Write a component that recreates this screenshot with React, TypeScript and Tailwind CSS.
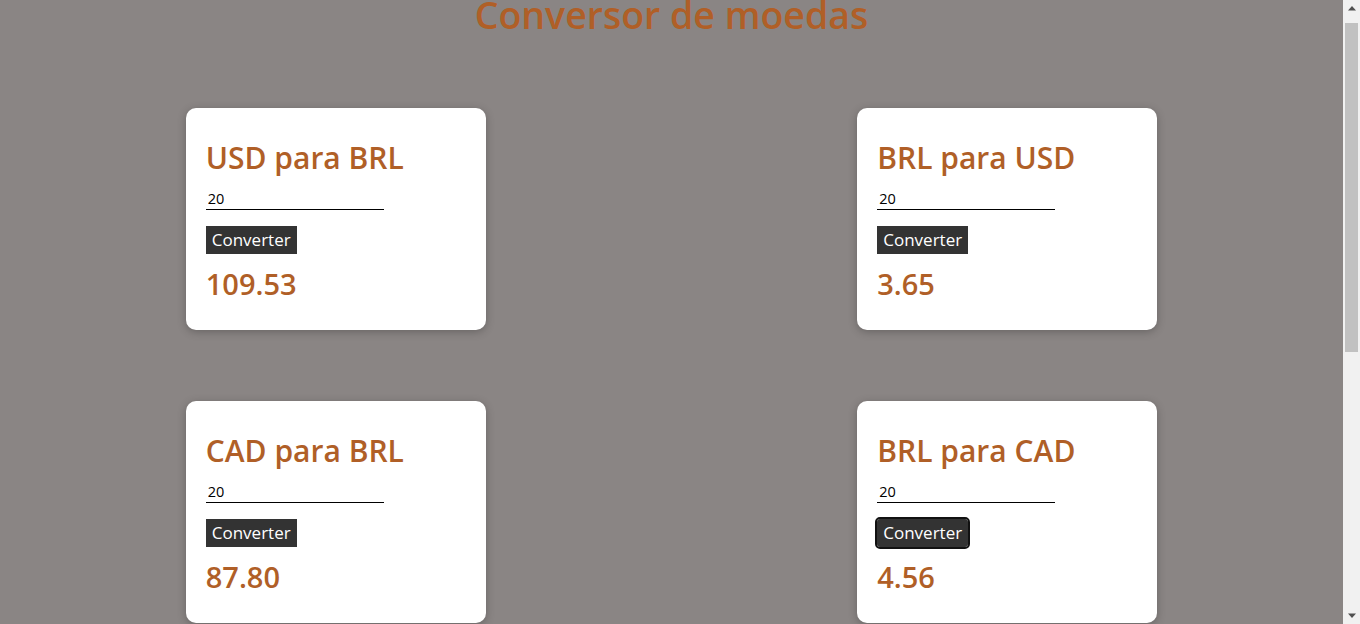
import { useEffect, useRef, useState } from 'react';

type Pair = { from: string; to: string; rate: number };

const pairs: Pair[] = [
  { from: 'USD', to: 'BRL', rate: 5.4765 },
  { from: 'BRL', to: 'USD', rate: 0.1826 },
  { from: 'CAD', to: 'BRL', rate: 4.39 },
  { from: 'BRL', to: 'CAD', rate: 0.228 },
  { from: 'EUR', to: 'BRL', rate: 5.9 },
  { from: 'BRL', to: 'EUR', rate: 0.1695 },
];

function ConverterCard({ pair, focused }: { pair: Pair; focused?: boolean }) {
  const [value, setValue] = useState('20');
  const [result, setResult] = useState((20 * pair.rate).toFixed(2));

  return (
    <div className="h-[222px] w-[300px] rounded-[10px] bg-white px-5 pt-5 shadow-[0_2px_8px_rgba(0,0,0,0.25)]">
      <h2 className="mt-3 text-[30px] leading-[36px] font-semibold text-[#b05f27]">
        {pair.from} para {pair.to}
      </h2>
      <input
        value={value}
        onChange={(e) => setValue(e.target.value)}
        className="mt-3 block h-[22px] w-[178px] border-b border-black px-[2px] text-[14.5px] text-black outline-none"
      />
      <button
        onClick={() => setResult((Number(value) * pair.rate).toFixed(2))}
        className={
          'mt-4 block h-[28px] bg-[#333333] px-[6px] text-[17px] leading-[28px] text-white ' +
          (focused ? 'rounded-[3px] outline-2 outline-offset-0 outline-[#111111]' : '')
        }
      >
        Converter
      </button>
      <p className="mt-[10px] text-[29px] leading-[40px] font-semibold text-[#b05f27]">{result}</p>
    </div>
  );
}

function Scrollbar() {
  return (
    <div className="flex h-screen w-[17px] shrink-0 flex-col bg-[#f1f1f1]">
      <div className="flex h-[17px] items-center justify-center">
        <svg width="8" height="5" viewBox="0 0 8 5">
          <path d="M4 0L8 4.5H0Z" fill="#505050" />
        </svg>
      </div>
      <div className="mx-[2px] mt-[6px] h-[329px] bg-[#c1c1c1]" />
      <div className="flex-1" />
      <div className="flex h-[17px] items-center justify-center">
        <svg width="8" height="5" viewBox="0 0 8 5">
          <path d="M0 0.5H8L4 5Z" fill="#505050" />
        </svg>
      </div>
    </div>
  );
}

export default function App() {
  const scrollRef = useRef<HTMLDivElement>(null);

  // the page is shown scrolled down a little
  useEffect(() => {
    if (scrollRef.current) scrollRef.current.scrollTop = 11;
  }, []);

  return (
    <div
      className="flex h-screen overflow-hidden bg-[#8a8584]"
      style={{ fontFamily: '"Open Sans", "Noto Sans", sans-serif' }}
    >
      <div ref={scrollRef} className="h-screen flex-1 overflow-y-auto [scrollbar-width:none]">
        <div className="pb-[192px]">
          <h1 className="mt-[6px] text-center text-[37.5px] leading-[40px] font-semibold text-[#b05f27]">
            Conversor de moedas
          </h1>
          <div className="mt-[73px] grid grid-cols-2 justify-items-center gap-y-[71px]">
            {pairs.map((p, i) => (
              <ConverterCard key={i} pair={p} focused={i === 3} />
            ))}
          </div>
        </div>
      </div>
      <Scrollbar />
    </div>
  );
}
